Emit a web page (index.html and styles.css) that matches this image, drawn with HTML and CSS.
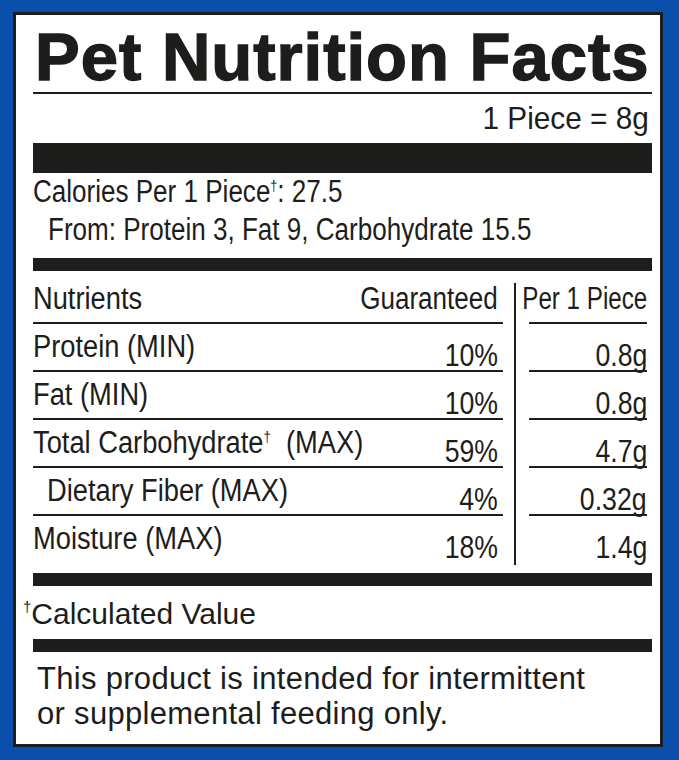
FILE: index.html
```html
<!DOCTYPE html>
<html>
<head>
<meta charset="utf-8">
<link rel="stylesheet" href="styles.css">
</head>
<body>
<div class="label">
  <div class="title">Pet Nutrition Facts</div>
  <div class="serving"><span class="cn-r serving-text">1 Piece = 8g</span></div>
  <div class="bar bar-thick"></div>
  <div class="calories">
    <div><span class="cn-l">Calories Per 1 Piece<span class="dag">†</span>: 27.5</span></div>
    <div class="indent"><span class="cn-l">From: Protein 3, Fat 9, Carbohydrate 15.5</span></div>
  </div>
  <div class="bar"></div>
  <div class="table">
    <div class="col-left">
      <div class="row head"><span class="name">Nutrients</span><span class="hval">Guaranteed</span></div>
      <div class="row"><span class="name">Protein (MIN)</span><span class="val">10%</span></div>
      <div class="row"><span class="name">Fat (MIN)</span><span class="val">10%</span></div>
      <div class="row"><span class="name">Total Carbohydrate<span class="dag">†</span>&nbsp; (MAX)</span><span class="val">59%</span></div>
      <div class="row"><span class="name sub">Dietary Fiber (MAX)</span><span class="val">4%</span></div>
      <div class="row last"><span class="name">Moisture (MAX)</span><span class="val">18%</span></div>
    </div>
    <div class="divider"></div>
    <div class="col-right">
      <div class="row head"><span class="hval">Per 1 Piece</span></div>
      <div class="row"><span class="val">0.8g</span></div>
      <div class="row"><span class="val">0.8g</span></div>
      <div class="row"><span class="val">4.7g</span></div>
      <div class="row"><span class="val">0.32g</span></div>
      <div class="row last"><span class="val">1.4g</span></div>
    </div>
  </div>
  <div class="bar"></div>
  <div class="calc"><span class="dag2">†</span>Calculated Value</div>
  <div class="bar"></div>
  <div class="note">This product is intended for intermittent<br>or supplemental feeding only.</div>
</div>
</body>
</html>
```
FILE: styles.css
```css
html, body {
  margin: 0;
  padding: 0;
}
body {
  background: #0b4fad;
  padding: 12px 16px 13px 13px;
  width: 679px;
  height: 760px;
  box-sizing: border-box;
  color: #1d1d1b;
  font-family: "Liberation Sans", Arial, sans-serif;
}
.label {
  background: #fff;
  border: 3px solid #1d1d1b;
  height: 735px;
  box-sizing: border-box;
  padding: 0 8px 0 17px;
  display: flex;
  flex-direction: column;
}
.title {
  font-weight: bold;
  font-size: 67px;
  line-height: 67px;
  letter-spacing: 1px;
  -webkit-text-stroke: 1.4px #1d1d1b;
  padding-top: 8px;
  padding-left: 2px;
  height: 69px;
  border-bottom: 2px solid #1d1d1b;
  white-space: nowrap;
}
.cn-l, .cn-r {
  display: inline-block;
  white-space: nowrap;
  transform: scaleX(0.86);
  transform-origin: 0 50%;
}
.cn-r {
  transform-origin: 100% 50%;
}
.serving {
  height: 49px;
  box-sizing: border-box;
  padding-top: 8px;
  font-size: 32px;
  line-height: 32px;
  text-align: right;
  padding-right: 3px;
}
.serving-text {
  transform: scaleX(0.93);
}
.bar {
  height: 13px;
  background: #1d1d1b;
  flex: none;
}
.bar-thick {
  height: 30px;
}
.calories {
  height: 85px;
  font-size: 31px;
  line-height: 38px;
}
.calories .cn-l {
  transform: scaleX(0.84);
}
.indent {
  padding-left: 15px;
}
.dag {
  font-size: 15px;
  line-height: 0;
  vertical-align: 11px;
}
.table {
  display: flex;
  height: 302px;
  flex: none;
  font-size: 31px;
}
.col-left {
  width: 470px;
  display: flex;
  flex-direction: column;
}
.divider {
  width: 2px;
  background: #1d1d1b;
  margin: 12px 13px 8px 11px;
}
.col-right {
  width: 118px;
  display: flex;
  flex-direction: column;
}
.row {
  display: flex;
  justify-content: space-between;
  height: 48px;
  box-sizing: border-box;
  border-bottom: 2px solid #1d1d1b;
  flex: none;
}
.row.head {
  height: 53px;
}
.row.last {
  border-bottom: none;
  height: 46px;
}
.col-right .row {
  justify-content: flex-end;
}
.name, .val, .hval {
  white-space: nowrap;
  transform: scaleX(0.88);
}
.name {
  line-height: 32px;
  padding-top: 7px;
  transform-origin: 0 50%;
}
.row.head .name, .hval {
  padding-top: 12px;
  line-height: 32px;
}
.hval, .val {
  transform-origin: 100% 50%;
}
.hval {
  transform: scaleX(0.84);
}
.col-right .hval {
  transform: scaleX(0.78);
}
.col-left .hval, .col-left .val {
  margin-right: 5px;
}
.sub {
  margin-left: 14px;
}
.val {
  align-self: flex-end;
  line-height: 28px;
  transform: scaleX(0.86);
}
.calc {
  height: 53px;
  box-sizing: border-box;
  padding-top: 13px;
  font-size: 30px;
  line-height: 30px;
  margin-left: -11px;
  padding-left: 1px;
}
.dag2 {
  font-size: 15px;
  line-height: 0;
  vertical-align: 12px;
}
.note {
  font-size: 31px;
  line-height: 35px;
  letter-spacing: 0.3px;
  padding-top: 9px;
  padding-left: 4px;
}
```
